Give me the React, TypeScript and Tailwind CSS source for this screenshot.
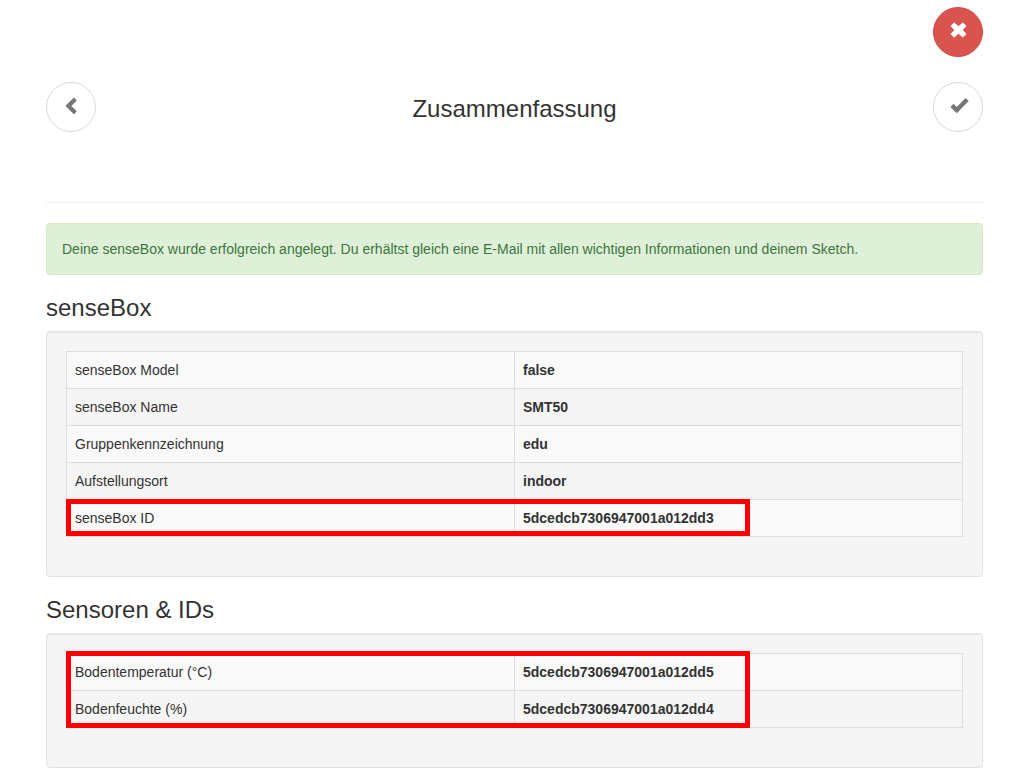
import type { ReactNode } from "react";

type Row = { label: string; value: string };

const boxRows: Row[] = [
  { label: "senseBox Model", value: "false" },
  { label: "senseBox Name", value: "SMT50" },
  { label: "Gruppenkennzeichnung", value: "edu" },
  { label: "Aufstellungsort", value: "indoor" },
  { label: "senseBox ID", value: "5dcedcb7306947001a012dd3" },
];

const sensorRows: Row[] = [
  { label: "Bodentemperatur (°C)", value: "5dcedcb7306947001a012dd5" },
  { label: "Bodenfeuchte (%)", value: "5dcedcb7306947001a012dd4" },
];

function CircleButton({ label, path, danger }: { label: string; path: string; danger?: boolean }) {
  return (
    <button
      type="button"
      aria-label={label}
      className={
        danger
          ? "size-[50px] shrink-0 rounded-full border border-[#d64b46] bg-[#d9534f] text-white"
          : "size-[50px] shrink-0 rounded-full border border-[#d8d8d8] bg-white text-[#777777]"
      }
    >
      <svg viewBox="0 0 48 48" className="size-full" fill="currentColor" aria-hidden="true">
        <path d={path} />
      </svg>
    </button>
  );
}

function Section({ title, rows, children }: { title: string; rows: Row[]; children: ReactNode }) {
  return (
    <section className="mt-5">
      <h3 className="mb-2.5 text-2xl leading-[26px]">{title}</h3>
      <div className="rounded-sm border border-[#e3e3e3] bg-[#f5f5f5] px-[19px] pt-[19px] pb-[39px] shadow-[inset_0_1px_1px_rgba(0,0,0,0.05)]">
        <div className="relative">
          <table className="w-full table-fixed border-collapse text-left">
            <tbody>
              {rows.map((row) => (
                <tr key={row.label} className="odd:bg-[#f9f9f9]">
                  <td className="border border-[#dddddd] p-2">{row.label}</td>
                  <td className="border border-[#dddddd] p-2 font-bold">{row.value}</td>
                </tr>
              ))}
            </tbody>
          </table>
          {children}
        </div>
      </div>
    </section>
  );
}

export default function App() {
  return (
    <main className="bg-white pt-[7px] pr-[29px] pb-2 pl-[46px] font-['Liberation_Sans',Arial,sans-serif] text-sm leading-5 text-[#333333]">
      <div className="flex justify-end">
        <CircleButton
          danger
          label="Schließen"
          path="M20.6 14.8 24.5 18.3 28.4 14.8Q28.8 14.4 29.2 14.8L32.1 17.7Q32.5 18.1 32.1 18.5L28.7 22 32.1 25.6Q32.5 26 32.1 26.4L29.2 29.2Q28.8 29.6 28.4 29.2L24.5 25.8 20.6 29.2Q20.2 29.6 19.8 29.2L16.9 26.4Q16.5 26 16.9 25.6L20.3 22 16.9 18.5Q16.5 18.1 16.9 17.7L19.8 14.8Q20.2 14.4 20.6 14.8Z"
        />
      </div>
      <header className="mt-[25px] flex items-center justify-between">
        <CircleButton
          label="Zurück"
          path="M27.2 14.8 29.6 17.2Q29.9 17.5 29.6 17.8L24.4 22.9 29.6 28Q29.9 28.3 29.6 28.6L27.2 31Q26.9 31.3 26.6 31L18.8 23.3Q18.4 22.9 18.8 22.5L26.6 14.8Q26.9 14.5 27.2 14.8Z"
        />
        <h1 className="pt-1 text-2xl leading-[26px]">Zusammenfassung</h1>
        <CircleButton
          label="Bestätigen"
          path="M31.5 15 34.7 18.1 22.8 30.3 16.3 24 19.5 20.8 22.8 23.9Z"
        />
      </header>
      <hr className="mt-[70px] mb-5 border-[#eeeeee]" />
      <div role="status" className="rounded-sm border border-[#d6e9c6] bg-[#dff0d8] p-[15px] text-[#3c763d]">
        Deine senseBox wurde erfolgreich angelegt. Du erhältst gleich eine E-Mail mit allen wichtigen Informationen und
        deinem Sketch.
      </div>
      <Section title="senseBox" rows={boxRows}>
        <div className="pointer-events-none absolute bottom-px left-0 h-[37px] w-[684px] max-w-full border-[5px] border-[#ff0000]" />
      </Section>
      <Section title="Sensoren & IDs" rows={sensorRows}>
        <div className="pointer-events-none absolute bottom-0 left-0 h-[77px] w-[684px] max-w-full border-[5px] border-[#ff0000]" />
      </Section>
    </main>
  );
}
